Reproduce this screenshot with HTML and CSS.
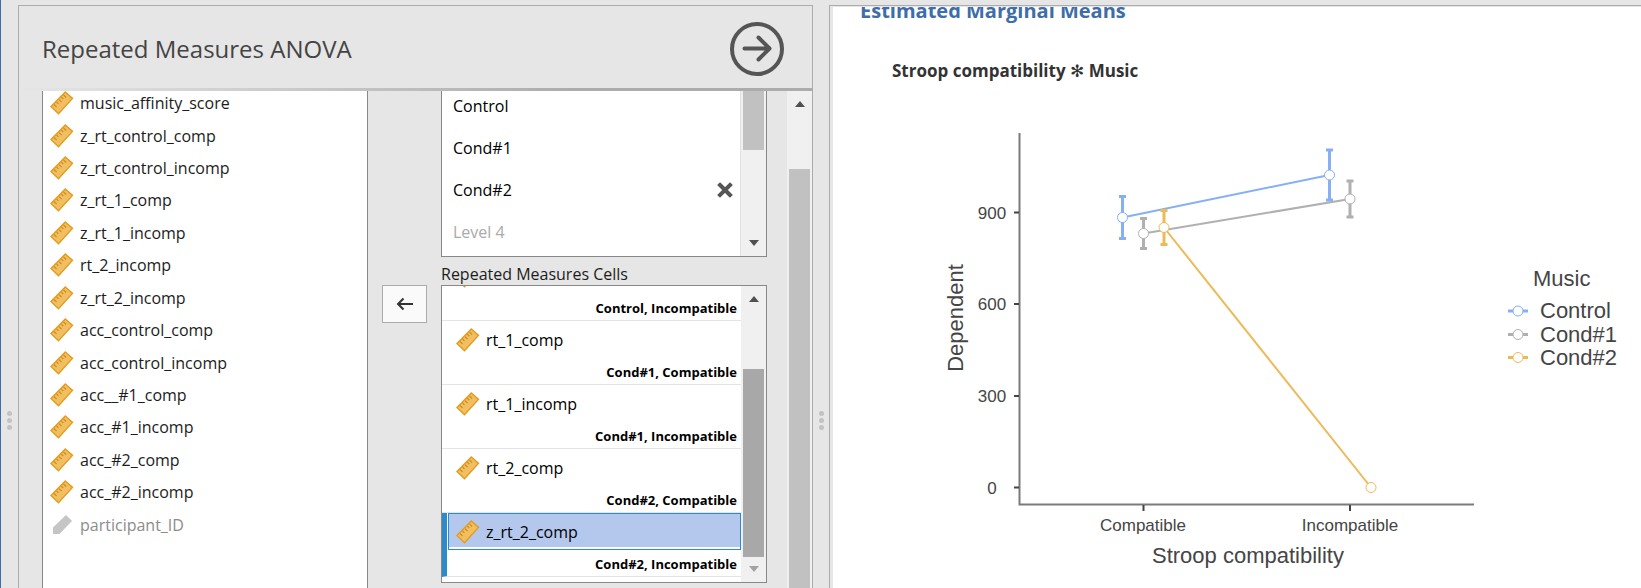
FILE: index.html
```html
<!DOCTYPE html>
<html lang="en">
<head>
<meta charset="utf-8">
<title>Repeated Measures ANOVA</title>
<link rel="stylesheet" href="styles.css">
</head>
<body>
<svg class="defs" aria-hidden="true">
  <symbol id="ruler" viewBox="0 0 24 24">
    <path d="M15.300 1 22.500 7.400 8.500 22.700 1 15.600Z" fill="#f1be62" stroke="#e29c1f" stroke-width="1.400"/>
    <path d="M4 13.500l2.600 2.600M6.600 11l1.800 1.800M9 8.600l2.600 2.600M11.400 6.200l1.800 1.800M13.500 3.900l2.600 2.600" fill="none" stroke="#d08c18" stroke-width="1.200"/>
  </symbol>
  <symbol id="tag" viewBox="0 0 24 24">
    <path d="M16 2 22 8 9.500 21H3V14.500Z" fill="#c5c5c5"/>
  </symbol>
</svg>
<main class="app">
  <div class="splitter"><i></i><i></i><i></i></div>
  <section class="panel">
    <header class="panel-head">
      <h1>Repeated Measures ANOVA</h1>
      <button class="go" type="button" aria-label="Close options">
        <svg viewBox="0 0 54 54"><circle cx="27" cy="27" r="25" /><path d="M14.500 26.500H39M28.500 15.500 39.500 26.500 28.500 37.500"/></svg>
      </button>
    </header>
    <div class="options">
      <div class="fields">
        <ul class="vars">
          <li><svg><use href="#ruler"/></svg>music_affinity_score</li>
          <li><svg><use href="#ruler"/></svg>z_rt_control_comp</li>
          <li><svg><use href="#ruler"/></svg>z_rt_control_incomp</li>
          <li><svg><use href="#ruler"/></svg>z_rt_1_comp</li>
          <li><svg><use href="#ruler"/></svg>z_rt_1_incomp</li>
          <li><svg><use href="#ruler"/></svg>rt_2_incomp</li>
          <li><svg><use href="#ruler"/></svg>z_rt_2_incomp</li>
          <li><svg><use href="#ruler"/></svg>acc_control_comp</li>
          <li><svg><use href="#ruler"/></svg>acc_control_incomp</li>
          <li><svg><use href="#ruler"/></svg>acc__#1_comp</li>
          <li><svg><use href="#ruler"/></svg>acc_#1_incomp</li>
          <li><svg><use href="#ruler"/></svg>acc_#2_comp</li>
          <li><svg><use href="#ruler"/></svg>acc_#2_incomp</li>
          <li class="off"><svg><use href="#tag"/></svg>participant_ID</li>
        </ul>
        <button class="move" type="button" aria-label="Remove variable">
          <svg viewBox="0 0 18 14"><path d="M17 7H2M7.500 1.500 2 7l5.500 5.500"/></svg>
        </button>
        <div class="targets">
          <div class="box levels">
            <div class="level-list">
              <div class="level"><input type="text" value="Control" aria-label="Level 1"></div>
              <div class="level"><input type="text" value="Cond#1" aria-label="Level 2"></div>
              <div class="level"><input type="text" value="Cond#2" aria-label="Level 3">
                <button class="remove" type="button" aria-label="Remove level"><svg viewBox="0 0 16 16"><path d="M3 3l10 10M13 3 3 13"/></svg></button></div>
              <div class="level"><input type="text" placeholder="Level 4" aria-label="New level"></div>
            </div>
            <div class="bar levels-bar"><span class="thumb"></span><span class="down"></span></div>
          </div>
          <h2 id="cells-label">Repeated Measures Cells</h2>
          <div class="box cells">
            <ul class="cell-list" aria-labelledby="cells-label">
              <li><div class="item"><svg><use href="#ruler"/></svg></div><div class="tagline">Control, Incompatible</div></li>
              <li><div class="item"><svg><use href="#ruler"/></svg>rt_1_comp</div><div class="tagline">Cond#1, Compatible</div></li>
              <li><div class="item"><svg><use href="#ruler"/></svg>rt_1_incomp</div><div class="tagline">Cond#1, Incompatible</div></li>
              <li><div class="item"><svg><use href="#ruler"/></svg>rt_2_comp</div><div class="tagline">Cond#2, Compatible</div></li>
              <li class="current"><div class="item"><svg><use href="#ruler"/></svg>z_rt_2_comp</div><div class="tagline">Cond#2, Incompatible</div></li>
            </ul>
            <div class="bar cells-bar"><span class="up"></span><span class="thumb"></span><span class="down"></span></div>
          </div>
        </div>
      </div>
      <div class="bar panel-bar"><span class="up"></span><span class="thumb"></span></div>
    </div>
  </section>
  <div class="splitter"><i></i><i></i><i></i></div>
  <section class="results">
    <div class="page">
      <h2>Estimated Marginal Means</h2>
      <h3>Stroop compatibility <span class="star">✻</span> Music</h3>
      <svg class="plot" viewBox="920 120 710 460" role="img" aria-label="Marginal means of Stroop compatibility by Music">
        <g class="axis">
          <path d="M1019.500 133V504.500H1474"/>
          <path class="tick" d="M1014 212.500h5M1014 304h5M1014 396h5M1014 487.500h5M1143.500 505v6M1350 505v6"/>
        </g>
        <g class="num">
          <text x="992" y="219">900</text><text x="992" y="310">600</text><text x="992" y="402">300</text><text x="992" y="494">0</text>
          <text x="1143" y="531">Compatible</text><text x="1350" y="531">Incompatible</text>
        </g>
        <g class="title">
          <text x="1248" y="563">Stroop compatibility</text>
          <text transform="translate(963 318) rotate(-90)">Dependent</text>
        </g>
        <path class="line c3" d="M1164 227.500 1371 487.500"/>
        <path class="line c2" d="M1143.500 233.500 1350 199"/>
        <path class="line c1" d="M1122.500 217.500 1329.500 175"/>
        <path class="err c1" d="M1122.500 196.500v42M1119 196.500h7M1119 238.500h7M1329.500 150v50M1326 150h7M1326 200h7"/>
        <path class="err c2" d="M1143.500 218.500v30M1140 218.500h7M1140 248.500h7M1350 181v36M1346.500 181h7M1346.500 217h7"/>
        <path class="err c3" d="M1164 210.500v34M1160.500 210.500h7M1160.500 244.500h7"/>
        <g class="dot c1"><circle cx="1122.500" cy="217.500" r="5"/><circle cx="1329.500" cy="175" r="5"/></g>
        <g class="dot c2"><circle cx="1143.500" cy="233.500" r="5"/><circle cx="1350" cy="199" r="5"/></g>
        <g class="dot c3"><circle cx="1164" cy="227.500" r="5"/><circle cx="1371" cy="487.500" r="5"/></g>
        <g class="legend">
          <text x="1533" y="286">Music</text>
          <text x="1540" y="318">Control</text><text x="1540" y="342">Cond#1</text><text x="1540" y="365">Cond#2</text>
        </g>
        <path class="err c1" d="M1508 311h20"/><path class="err c2" d="M1508 334.500h20"/><path class="err c3" d="M1508 357.500h20"/>
        <g class="dot c1"><circle cx="1518" cy="311" r="5"/></g>
        <g class="dot c2"><circle cx="1518" cy="334.500" r="5"/></g>
        <g class="dot c3"><circle cx="1518" cy="357.500" r="5"/></g>
      </svg>
    </div>
  </section>
</main>
</body>
</html>
```
FILE: styles.css
```css
* { box-sizing: border-box; }
body {
  margin: 0;
  height: 100vh;
  overflow: hidden;
  background: #e6e6e6;
  border-left: 1px solid #3e6da9;
  color: #1c1c1c;
  font: 16px/20px "Open Sans", "Noto Sans", sans-serif;
}
h1, h2, h3, ul { margin: 0; padding: 0; font-weight: 400; }
ul { list-style: none; }
button, input { font: inherit; color: inherit; }
button { padding: 0; cursor: pointer; }
svg { display: block; }
.defs { position: absolute; width: 0; height: 0; }

.app {
  display: grid;
  grid-template-columns: 17px 795fr 16px 812fr;
  height: 100%;
  padding-top: 5px;
}
.splitter {
  display: flex;
  flex-direction: column;
  align-items: center;
  gap: 2px;
  padding-top: 406px;
}
.splitter i { width: 5px; height: 5px; border-radius: 50%; background: #c2c2c2; }

.panel {
  display: flex;
  flex-direction: column;
  min-width: 0;
  min-height: 0;
  border: 1px solid #acacac;
  border-bottom: 0;
}
.panel-head {
  display: flex;
  flex: none;
  align-items: center;
  justify-content: space-between;
  height: 85px;
  padding: 4px 28px 0 23px;
  border-bottom: 3px solid;
  border-image: linear-gradient(to right, #e6e6e6, #acacac 70%) 1;
}
.panel-head h1 {
  color: #444;
  font-size: 24px;
  line-height: 34px;
}
.go { width: 54px; height: 54px; border: 0; background: none; }
.go svg { width: 54px; height: 54px; fill: none; stroke: #555; stroke-width: 4; stroke-linecap: round; stroke-linejoin: round; }

.options { display: flex; flex: 1; min-height: 0; overflow: hidden; }
.fields {
  display: grid;
  grid-template-columns: 1fr 45px 1fr;
  column-gap: 14px;
  flex: 1;
  min-width: 0;
  padding: 0 20px 0 23px;
}
.vars {
  display: grid;
  grid-auto-rows: 1fr;
  height: 454px;
  margin-top: -4px;
  padding: 0 0 60px 7px;
  box-sizing: content-box;
  border: 1px solid #888;
  border-width: 0 1px;
  background: #fff;
}
.vars li, .item { display: flex; align-items: center; gap: 6px; }
.vars svg, .item svg { flex: none; width: 24px; height: 24px; }
.vars .off { color: #8c8c8c; }
.move {
  display: grid;
  place-items: center;
  height: 38px;
  margin-top: 194px;
  border: 1px solid #acacac;
  background: #fafafa;
}
.move svg { width: 18px; height: 14px; fill: none; stroke: #333; stroke-width: 2; }
.targets { min-width: 0; }

.box { display: flex; overflow: hidden; border: 1px solid #888; background: #fff; }
.levels { height: 166px; border-top: 0; }
.level-list { flex: 1; min-width: 0; margin-top: -6px; border-right: 1px solid #e0e0e0; }
.level { display: flex; align-items: center; height: 42px; padding: 0 7px 0 11px; }
.level input { flex: 1; min-width: 0; padding: 0; border: 0; outline: 0; background: none; color: #000; }
.level input::placeholder { color: #aaa; opacity: 1; }
.remove { border: 0; background: none; }
.remove svg { width: 16px; height: 16px; fill: none; stroke: #555; stroke-width: 4; stroke-linecap: square; }
.targets h2 { padding: 7px 0 1px; font-size: 16px; line-height: 20px; }
.cells { height: 298px; }
.cell-list { flex: 1; min-width: 0; margin-top: -29px; }
.cell-list li { height: 64px; padding-left: 6px; border-bottom: 1px solid #e4e4e4; }
.item { height: 37px; padding-left: 7px; border: 1px solid transparent; color: #000; }
.tagline {
  padding-right: 4px;
  color: #000;
  font-size: 13px;
  font-weight: 700;
  line-height: 28px;
  text-align: right;
}
.cell-list .current { padding-left: 1px; border-left: 5px solid #2b8cc9; }
.current .item { border-color: #2b8cc9; background: linear-gradient(#b4c8ee, #b4c8ee) top / 100% 33px no-repeat; }

.bar { display: flex; flex: none; flex-direction: column; align-items: center; width: 25px; background: #f0f0f0; }
.bar .thumb { width: 21px; background: #c1c1c1; }
.up, .down { border: 5px solid transparent; }
.up { border-bottom: 6px solid #505050; border-top: 0; }
.down { border-top: 6px solid #505050; border-bottom: 0; }
.levels-bar .thumb { height: 59px; margin-bottom: 90px; }
.cells-bar { padding-top: 10px; }
.cells-bar .thumb { height: 188px; margin: 67px 0 9px; background: #a8a8a8; }
.cells-bar .down { border-top-color: #a3a3a3; }
.panel-bar { padding-top: 10px; }
.panel-bar .thumb { flex: 1; margin-top: 62px; }

.results {
  min-width: 0;
  padding: 1px 0 0 3px;
  overflow: hidden;
  border: 1px solid #acacac;
  border-width: 1px 0 0 1px;
}
.page { height: 100%; padding-left: 27px; overflow: hidden; background: #fff; }
.page h2 {
  margin-top: -10px;
  color: #3e6da9;
  font-size: 20px;
  font-weight: 700;
  line-height: 28px;
}
.page h3 {
  padding: 36px 0 0 32px;
  color: #333;
  font-size: 17px;
  font-weight: 700;
  line-height: 20px;
}
.star { font-family: "DejaVu Sans", sans-serif; font-weight: 400; }
.plot { width: 710px; height: 460px; margin: 39px 0 0 60px; font-family: "Liberation Sans", Arial, sans-serif; }
.plot path { fill: none; }
.plot text { fill: #454545; }
.num { font-size: 17px; text-anchor: middle; }
.title { font-size: 22px; text-anchor: middle; }
.legend { font-size: 22px; }
.axis path { stroke: #7a7a7a; stroke-width: 2; }
.axis .tick { stroke: #444; }
.line { stroke-width: 2; }
.err { stroke-width: 3; }
.dot circle { fill: #fff; stroke-width: 1; }
.c1 { stroke: #86b0f3; }
.c2 { stroke: #b0b0b0; }
.c3 { stroke: #edba58; }
```
